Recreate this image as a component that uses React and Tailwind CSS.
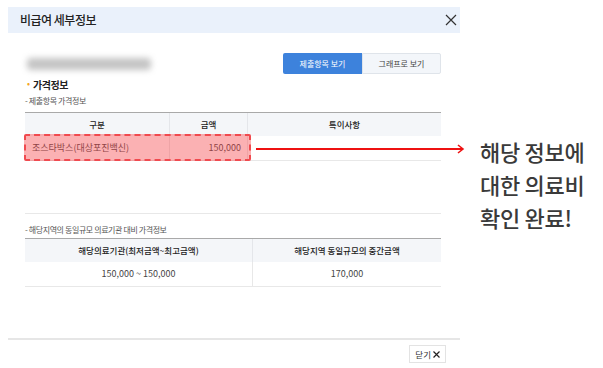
import React from "react";

export default function App() {
  const font = { fontFamily: '"Noto Sans CJK KR", "Noto Sans", sans-serif' };
  return (
    <div className="relative w-[603px] h-[368px] bg-white overflow-hidden" style={font}>
      <div className="flex items-start">
        {/* Modal */}
        <div className="ml-[8px] mt-[7px] w-[452px] h-[361px] flex flex-col">
          <div className="h-[26px] bg-[#eaf1fb] flex items-center justify-between pl-[12px] pr-[3px]">
            <span className="text-[12px] font-medium text-[#222] tracking-[-0.5px]">비급여 세부정보</span>
            <svg width="12" height="12" viewBox="0 0 12 12" className="mt-[-1px]">
              <path d="M1 1 L11 11 M11 1 L1 11" stroke="#333" strokeWidth="1.2" />
            </svg>
          </div>
          <div className="pl-[17px] pr-[19px] flex-1 flex flex-col">
            <div className="mt-[20px] h-[21px] flex items-center justify-between">
              <div className="ml-[2px] w-[124px] h-[12px] bg-[#c4c4c4] blur-[3px] rounded-[4px]"></div>
              <div className="flex h-[21px]">
                <div className="w-[79px] bg-[#3d82dc] text-white text-[8px] flex items-center justify-center rounded-l-[2px]">제출항목 보기</div>
                <div className="w-[79px] bg-[#f3f6fa] border border-[#dfe4ea] text-[#444] text-[8px] flex items-center justify-center rounded-r-[2px]">그래프로 보기</div>
              </div>
            </div>
            <div className="mt-[3px] h-[14px] flex items-center gap-[3px] pl-[2px]">
              <span className="text-[#f5a623] text-[9px]">•</span>
              <span className="text-[10px] font-bold text-[#222] tracking-[-0.5px]">가격정보</span>
            </div>
            <div className="mt-[4px] h-[12px] flex items-center text-[8px] text-[#555] tracking-[-0.4px]">- 제출항목 가격정보</div>
            <div className="relative mt-[5px] border-t border-[#a9a9a9]">
              <div className="flex h-[23px] bg-[#f4f6f9] text-[8.5px] font-medium text-[#222]">
                <div className="w-[145px] flex items-center justify-center border-r border-[#e4e6ea]">구분</div>
                <div className="w-[78px] flex items-center justify-center border-r border-[#e4e6ea]">금액</div>
                <div className="flex-1 flex items-center justify-center">특이사항</div>
              </div>
              <div className="flex h-[25px] border-b border-[#e8e8e8] text-[9px] text-[#444]">
                <div className="w-[145px] flex items-center pl-[7px] border-r border-[#e8e8e8]">조스타박스(대상포진백신)</div>
                <div className="w-[78px] flex items-center justify-end pr-[6px] border-r border-[#e8e8e8]">150,000</div>
                <div className="flex-1"></div>
              </div>
              <div className="h-[53px] border-b border-[#e8e8e8]"></div>
              <div className="absolute left-[-1px] top-[21px] w-[227px] h-[27px] bg-[rgba(245,70,75,0.42)] border-2 border-dashed border-[#f04a4f] rounded-[2px]"></div>
            </div>
            <div className="mt-[10px] h-[12px] flex items-center text-[8px] text-[#555] tracking-[-0.4px]">- 해당지역의 동일규모 의료기관 대비 가격정보</div>
            <div className="mt-[2px] border-t border-[#a9a9a9]">
              <div className="flex h-[23px] bg-[#f4f6f9] text-[8.5px] font-medium text-[#222]">
                <div className="w-[228px] flex items-center justify-center border-r border-[#e4e6ea]">해당의료기관(최저금액~최고금액)</div>
                <div className="flex-1 flex items-center justify-center">해당지역 동일규모의 중간금액</div>
              </div>
              <div className="flex h-[25px] border-b border-[#e8e8e8] text-[9px] text-[#444]">
                <div className="w-[228px] flex items-center justify-center border-r border-[#e8e8e8]">150,000 ~ 150,000</div>
                <div className="flex-1 flex items-center justify-center">170,000</div>
              </div>
            </div>
          </div>
          <div className="border-t-2 border-[#e6e6e6] mb-[5px]">
            <div className="flex justify-end pr-[14px] pt-[5px]">
              <div className="h-[18px] px-[5px] border border-[#e3e3e3] text-[8.5px] text-[#333] flex items-center gap-[2px]">
                <span>닫기</span>
                <svg width="7" height="7" viewBox="0 0 7 7"><path d="M0.5 0.5 L6.5 6.5 M6.5 0.5 L0.5 6.5" stroke="#222" strokeWidth="1.2" /></svg>
              </div>
            </div>
          </div>
        </div>
        {/* Right text */}
        <div className="ml-[20px] mt-[135px] text-[22px] leading-[33px] font-medium text-[#3a3a3a] tracking-[-0.3px]">
          <div>해당 정보에</div>
          <div>대한 의료비</div>
          <div>확인 완료!</div>
        </div>
      </div>
      {/* Arrow */}
      <svg className="absolute left-[254px] top-[144px]" width="212" height="10" viewBox="0 0 212 10">
        <path d="M2 5 H209" stroke="#ee1111" strokeWidth="2" />
        <path d="M204 1 L209 5 L204 9" stroke="#ee1111" strokeWidth="1.6" fill="none" />
      </svg>
    </div>
  );
}
